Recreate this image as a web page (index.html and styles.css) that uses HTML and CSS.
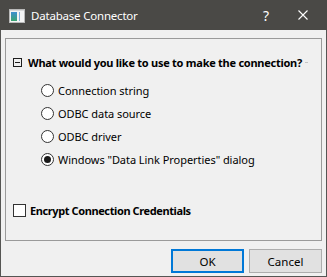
FILE: index.html
```html
<!DOCTYPE html>
<html lang="en">
<head>
    <meta charset="UTF-8">
    <title>Database Connector</title>
    <link rel="stylesheet" href="styles.css">
</head>
<body>
    <div class="window">
        <div class="titlebar">
            <svg class="app-icon" width="16" height="14" viewBox="0 0 16 14">
                <defs>
                    <linearGradient id="panel" x1="0" y1="0" x2="0" y2="1">
                        <stop offset="0" stop-color="#3f8fd0"/>
                        <stop offset="1" stop-color="#3aa56f"/>
                    </linearGradient>
                </defs>
                <rect x="0.5" y="0.5" width="15" height="13" fill="#f4f4f4" stroke="#b9b9b9"/>
                <rect x="2" y="3" width="6" height="9" fill="url(#panel)"/>
                <rect x="10" y="3" width="1" height="9" fill="#7fb0dc"/>
                <rect x="1" y="1" width="14" height="1" fill="#d8d8d8"/>
            </svg>
            <span class="title">Database Connector</span>
            <span class="help">?</span>
            <svg class="close" width="10" height="10" viewBox="0 0 10 10">
                <path d="M0.5 0.5 L9.5 9.5 M9.5 0.5 L0.5 9.5" stroke="#ffffff" stroke-width="1.1" fill="none"/>
            </svg>
        </div>
        <div class="client">
            <div class="group">
                <div class="heading">
                    <span class="collapse"></span>
                    <span class="heading-text">What would you like to use to make the connection?</span>
                    <span class="heading-line"></span>
                </div>
                <div class="options">
                    <label class="option"><span class="radio"></span>Connection string</label>
                    <label class="option"><span class="radio"></span>ODBC data source</label>
                    <label class="option"><span class="radio"></span>ODBC driver</label>
                    <label class="option"><span class="radio checked"></span>Windows "Data Link Properties" dialog</label>
                </div>
                <label class="encrypt"><span class="checkbox"></span>Encrypt Connection Credentials</label>
            </div>
            <div class="buttons">
                <button class="btn default">OK</button>
                <button class="btn">Cancel</button>
            </div>
        </div>
    </div>
</body>
</html>
```

FILE: styles.css
```css
body {
    margin: 0;
    font-family: "Segoe UI", "Noto Sans", sans-serif;
    font-size: 11px;
    letter-spacing: -0.05px;
    color: #000;
}
.window {
    width: 327px;
    height: 277px;
    box-sizing: border-box;
    border: 1px solid #555553;
    border-top: none;
    display: flex;
    flex-direction: column;
    background: #f0f0f0;
}
.titlebar {
    height: 30px;
    flex: none;
    background: #4a4946;
    margin: 0 -1px;
    display: flex;
    align-items: center;
    padding-left: 9px;
    color: #fff;
}
.app-icon {
    margin-top: 1px;
}
.title {
    margin-left: 6px;
    font-size: 11.5px;
    letter-spacing: -0.2px;
    flex: 1;
}
.help {
    font-size: 14px;
    margin-right: 29px;
}
.close {
    margin-right: 19px;
}
.client {
    flex: 1;
    display: flex;
    flex-direction: column;
    padding: 8px 4px 0 4px;
}
.group {
    height: 203px;
    box-sizing: border-box;
    border: 1px solid #9a9a9a;
    padding: 17px 0 0 7px;
    display: flex;
    flex-direction: column;
}
.heading {
    display: flex;
    align-items: center;
    height: 12px;
    font-weight: bold;
    white-space: nowrap;
}
.heading-text {
    letter-spacing: -0.26px;
}
.collapse {
    width: 9px;
    height: 9px;
    border: 1px solid #1e1e1e;
    box-sizing: border-box;
    position: relative;
    margin-right: 6px;
    flex: none;
}
.collapse::after {
    content: "";
    position: absolute;
    left: 1px;
    right: 1px;
    top: 3px;
    height: 1px;
    background: #1e1e1e;
}
.heading-line {
    width: 3px;
    height: 1px;
    background: #c4c4c4;
    margin-left: 3px;
    flex: none;
}
.options {
    display: flex;
    flex-direction: column;
    gap: 10px;
    padding-left: 28px;
    margin-top: 16px;
}
.option, .encrypt {
    display: flex;
    align-items: center;
    height: 13px;
    white-space: nowrap;
}
.radio {
    width: 13px;
    height: 13px;
    box-sizing: border-box;
    border: 1px solid #333;
    border-radius: 50%;
    background: #fff;
    margin-right: 4px;
    display: flex;
    align-items: center;
    justify-content: center;
    flex: none;
}
.radio.checked::after {
    content: "";
    width: 7px;
    height: 7px;
    border-radius: 50%;
    background: #1a1a1a;
}
.encrypt {
    margin-top: 38px;
    font-weight: bold;
    letter-spacing: -0.4px;
}
.checkbox {
    width: 13px;
    height: 13px;
    box-sizing: border-box;
    border: 1px solid #333;
    background: #fff;
    margin-right: 4px;
    flex: none;
}
.buttons {
    display: flex;
    justify-content: flex-end;
    gap: 5px;
    margin-top: 8px;
}
.btn {
    width: 73px;
    height: 24px;
    box-sizing: border-box;
    background: #e1e1e1;
    border: 1px solid #adadad;
    font-family: inherit;
    font-size: 11.5px;
    letter-spacing: 0;
    color: #000;
    padding: 0;
}
.btn.default {
    border: 2px solid #0078d7;
}
```
